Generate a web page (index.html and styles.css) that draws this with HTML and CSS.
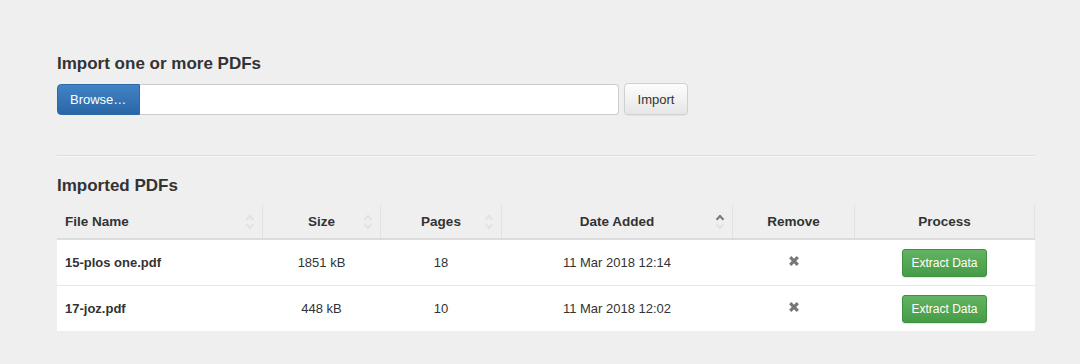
FILE: index.html
```html
<!DOCTYPE html>
<html lang="en">
<head>
    <meta charset="UTF-8">
    <title>Import PDFs</title>
    <link rel="stylesheet" href="styles.css">
</head>
<body>
    <div class="container">
        <h3>Import one or more PDFs</h3>
        <div class="upload">
            <div class="input-group">
                <span class="btn btn-primary">Browse&hellip;</span>
                <input type="text" class="file-path">
            </div>
            <button class="btn btn-default">Import</button>
        </div>

        <hr>

        <h3>Imported PDFs</h3>
        <table class="pdf-table">
            <thead>
                <tr>
                    <th class="col-name sortable">File Name<span class="sort"></span></th>
                    <th class="col-size sortable">Size<span class="sort"></span></th>
                    <th class="col-pages sortable">Pages<span class="sort"></span></th>
                    <th class="col-date sortable">Date Added<span class="sort asc"></span></th>
                    <th class="col-remove">Remove</th>
                    <th class="col-process">Process</th>
                </tr>
            </thead>
            <tbody id="pdf-rows">
                <!-- rows added by script -->
            </tbody>
        </table>
    </div>

    <script>
        // Imported files
        const pdfs = [
            { name: "15-plos one.pdf", size: "1851 kB", pages: 18, added: "11 Mar 2018 12:14" },
            { name: "17-joz.pdf", size: "448 kB", pages: 10, added: "11 Mar 2018 12:02" }
        ];

        const removeIcon = '<svg width="12" height="12" viewBox="0 0 11 11"><path d="M1 3L3 1L5.5 3.5L8 1L10 3L7.5 5.5L10 8L8 10L5.5 7.5L3 10L1 8L3.5 5.5Z" fill="#777"/></svg>';

        function renderRows(data) {
            const body = document.getElementById('pdf-rows');
            body.innerHTML = '';
            data.forEach(item => {
                body.innerHTML += `
                    <tr>
                        <td class="col-name"><strong>${item.name}</strong></td>
                        <td class="col-size">${item.size}</td>
                        <td class="col-pages">${item.pages}</td>
                        <td class="col-date">${item.added}</td>
                        <td class="col-remove"><span class="remove">${removeIcon}</span></td>
                        <td class="col-process"><button class="btn btn-success">Extract Data</button></td>
                    </tr>
                `;
            });
        }

        renderRows(pdfs);
    </script>
</body>
</html>
```

FILE: styles.css
```css
body {
    font-family: "Liberation Sans", Arial, sans-serif;
    font-size: 13px;
    margin: 0;
    padding: 0;
    background: #efefef;
    color: #333;
}

.container {
    width: 978px;
    margin-left: 57px;
    padding-top: 54px;
}

h3 {
    font-size: 17px;
    font-weight: bold;
    line-height: 20px;
    margin: 0 0 9px 0;
    color: #333;
}

.upload {
    display: flex;
    align-items: center;
    gap: 5px;
}

.input-group {
    display: flex;
    width: 562px;
    height: 31px;
}

.btn {
    font-family: "Liberation Sans", Arial, sans-serif;
    font-size: 13px;
    border-radius: 4px;
    border: 1px solid transparent;
    cursor: pointer;
    box-sizing: border-box;
}

.btn-primary {
    display: flex;
    align-items: center;
    padding: 0 12px;
    width: 83px;
    color: #fff;
    background: linear-gradient(#4283c5, #2a66a6);
    border-color: #2d68a8;
    border-radius: 4px 0 0 4px;
}

.file-path {
    flex: 1;
    border: 1px solid #ccc;
    border-left: none;
    border-radius: 0 4px 4px 0;
    background: #fff;
    box-sizing: border-box;
    height: 31px;
    margin: 0;
}

.btn-default {
    height: 32px;
    width: 64px;
    color: #333;
    background: linear-gradient(#fdfdfd, #e6e6e6);
    border-color: #d0d0d0;
    box-shadow: inset 0 1px 0 rgba(255, 255, 255, 0.15), 0 1px 1px rgba(0, 0, 0, 0.05);
}

hr {
    border: 0;
    border-top: 1px solid #dcdcdc;
    border-bottom: 1px solid #f8f8f8;
    margin: 40px 0 19px 0;
}

.pdf-table {
    width: 100%;
    border-collapse: collapse;
    margin-top: 1px;
}

.pdf-table th {
    height: 33px;
    font-size: 13.5px;
    font-weight: bold;
    text-align: center;
    position: relative;
    border-left: 1px solid #e2e2e2;
    border-bottom: 2px solid #dcdcdc;
    padding: 0 8px;
}

.pdf-table th:first-child {
    border-left: none;
}

.pdf-table th:last-child {
    border-right: 1px solid #e2e2e2;
}

.pdf-table th.col-name,
.pdf-table td.col-name {
    text-align: left;
}

.pdf-table tbody tr {
    background: #fff;
}

.pdf-table td {
    height: 45px;
    padding: 0 8px;
    text-align: center;
    border-top: 1px solid #e8e8e8;
}

.col-name { width: 189px; }
.col-size { width: 101px; }
.col-pages { width: 104px; }
.col-date { width: 214px; }
.col-remove { width: 105px; }

/* faint sort arrows in the header */
.sort {
    position: absolute;
    right: 8px;
    top: 50%;
    width: 8px;
    height: 16px;
    margin-top: -8px;
}

.sort::before,
.sort::after {
    content: "";
    position: absolute;
    left: 1px;
    width: 4px;
    height: 4px;
    border-left: 2px solid #e2e2e2;
    border-top: 2px solid #e2e2e2;
}

.sort::before {
    top: 2px;
    transform: rotate(45deg);
}

.sort::after {
    bottom: 2px;
    transform: rotate(225deg);
}

.sort.asc::before {
    border-color: #777;
}

.remove {
    display: inline-block;
    line-height: 0;
}

.btn-success {
    height: 28px;
    padding: 0 8px;
    font-size: 12px;
    color: #fff;
    border-radius: 3px;
    background: linear-gradient(#62b462, #469c46);
    border-color: #3e8f3e;
    box-shadow: 0 1px 1px rgba(0, 0, 0, 0.1);
}
```
